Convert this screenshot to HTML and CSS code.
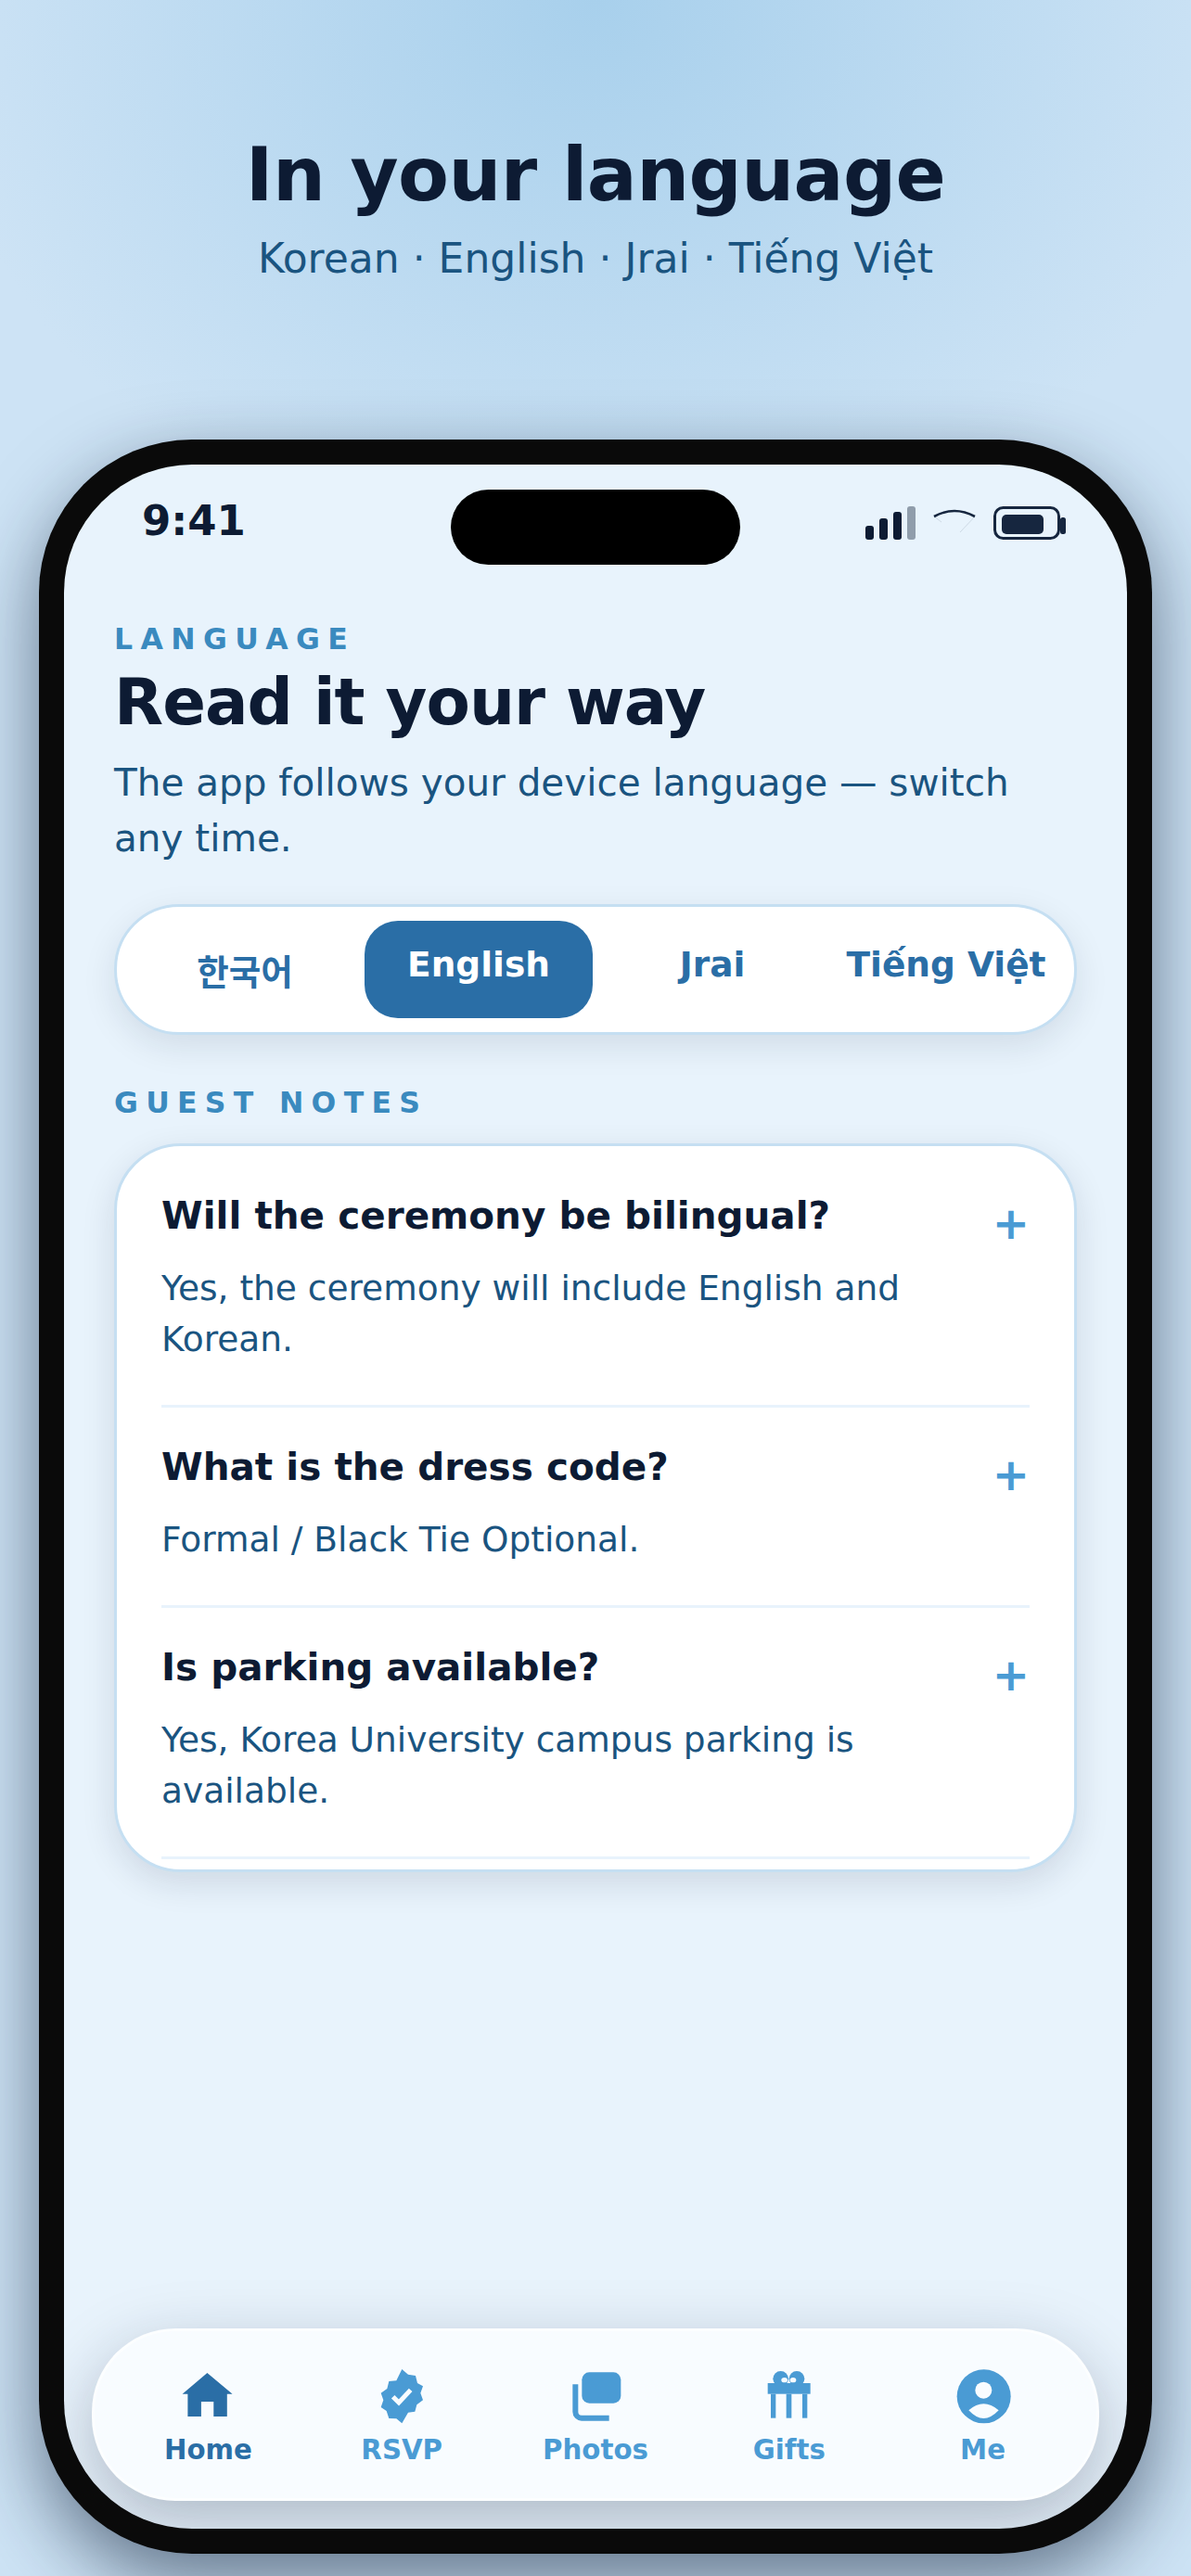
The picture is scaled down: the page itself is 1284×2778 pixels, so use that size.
FILE: index.html
```html
<!DOCTYPE html>
<html lang="en">
<head>
<meta charset="utf-8">
<title>In your language</title>
<link rel="stylesheet" href="styles.css">
</head>
<body>
<header class="hero">
  <h1 class="hero-title">In your language</h1>
  <p class="hero-sub">Korean · English · Jrai · Tiếng Việt</p>
</header>
<div class="phone">
  <div class="screen">
    <div class="status">
      <span class="time">9:41</span>
      <div class="island"></div>
      <div class="status-icons">
        <svg width="54" height="36" viewBox="0 0 54 36"><rect x="0" y="21" width="9" height="15" rx="3" fill="#0d1b33"/><rect x="15" y="13" width="9" height="23" rx="3" fill="#0d1b33"/><rect x="30" y="6" width="9" height="30" rx="3" fill="#0d1b33"/><rect x="45" y="0" width="9" height="36" rx="3" fill="#0d1b33" opacity=".4"/></svg>
        <svg width="48" height="30" viewBox="0 0 48 30"><path d="M2 11 Q24 -1 46 11" fill="none" stroke="#16263f" stroke-width="2.6"/><path d="M2 11 L10 17 M46 11 L30 28" fill="none" stroke="#16263f" stroke-width=".5" opacity=".25"/></svg>
        <svg width="78" height="36" viewBox="0 0 78 36"><rect x="1.5" y="1.5" width="69" height="33" rx="9" fill="none" stroke="#16263f" stroke-width="3"/><rect x="9" y="9" width="45" height="21" rx="5" fill="#16263f"/><rect x="72" y="12" width="6" height="18" rx="2.5" fill="#16263f"/></svg>
      </div>
    </div>
    <main class="content">
      <div class="eyebrow">LANGUAGE</div>
      <h2 class="title">Read it your way</h2>
      <p class="lede">The app follows your device language — switch any time.</p>
      <div class="segment">
        <div class="seg-item">한국어</div>
        <div class="seg-item active">English</div>
        <div class="seg-item">Jrai</div>
        <div class="seg-item">Tiếng Việt</div>
      </div>
      <div class="section-label">GUEST NOTES</div>
      <div class="card">
        <div class="row">
          <div class="q-line"><span class="q">Will the ceremony be bilingual?</span><span class="plus">+</span></div>
          <p class="a">Yes, the ceremony will include English and Korean.</p>
        </div>
        <div class="row">
          <div class="q-line"><span class="q">What is the dress code?</span><span class="plus">+</span></div>
          <p class="a">Formal / Black Tie Optional.</p>
        </div>
        <div class="row">
          <div class="q-line"><span class="q">Is parking available?</span><span class="plus">+</span></div>
          <p class="a">Yes, Korea University campus parking is available.</p>
        </div>
      </div>
    </main>
    <nav class="tabbar">
      <div class="tab on">
        <svg class="ic" viewBox="0 0 90 80"><path d="M44.4 19 L71.6 41.7 H65.8 V66 H51.3 V50 H37.9 V66 H23.4 V41.7 H17.6 Z"/></svg>
        <span>Home</span>
      </div>
      <div class="tab">
        <svg class="ic" viewBox="-6 0 270 240"><polygon points="130,45 150,62 174,66 180,90 198,100 190,122 198,145 178,160 172,182 150,185 130,220 112,205 88,204 80,180 62,168 70,145 62,122 82,108 88,84 112,82"/><path d="M101 134 L120 153 L158 112" fill="none" stroke="#f8fcff" stroke-width="15"/></svg>
        <span>RSVP</span>
      </div>
      <div class="tab">
        <svg class="ic" viewBox="-9 0 270 240"><rect x="82" y="55" width="126" height="100" rx="24"/><path d="M61 94 V183 a20 20 0 0 0 20 20 H170" fill="none" stroke="currentColor" stroke-width="18"/></svg>
        <span>Photos</span>
      </div>
      <div class="tab">
        <svg class="ic" viewBox="3 0 270 240"><circle cx="110" cy="76" r="25"/><circle cx="162" cy="76" r="25"/><rect x="68" y="90" width="138" height="35"/><rect x="78" y="125" width="16" height="78"/><rect x="128" y="125" width="17" height="78"/><rect x="180" y="125" width="16" height="78"/><ellipse cx="122" cy="80" rx="10" ry="8" fill="#f8fcff"/><ellipse cx="150" cy="80" rx="10" ry="8" fill="#f8fcff"/></svg>
        <span>Gifts</span>
      </div>
      <div class="tab">
        <svg class="ic" viewBox="0 0 270 240"><circle cx="137" cy="133" r="87"/><circle cx="136" cy="113" r="27" fill="#f8fcff"/><path d="M88 178 Q136 136 185 178 Q136 230 88 178 Z" fill="#f8fcff"/></svg>
        <span>Me</span>
      </div>
    </nav>
  </div>
</div>
</body>
</html>
```

FILE: styles.css
```css
* { box-sizing: border-box; }
html, body { margin: 0; height: 100%; }
body {
  width: 1284px; height: 2778px; overflow: hidden;
  font-family: "DejaVu Sans", "Noto Sans CJK KR", sans-serif;
  background: radial-gradient(ellipse 720px 620px at 50% 0, #a8d0ec 0%, #cde3f5 100%);
  background-color: #cde3f5;
  display: flex; flex-direction: column; align-items: center;
}
.hero { padding-top: 138px; height: 474px; text-align: center; }
.hero-title { margin: 0; font-size: 80px; letter-spacing: -.6px; font-weight: 700; line-height: 102px; color: #0d1b33; }
.hero-sub { margin: 12px 0 0; font-size: 44px; line-height: 54px; color: #1a5480; }
.phone {
  width: 1200px; height: 2280px; flex: none;
  background: #0a0a0a; border-radius: 165px; padding: 27px;
  box-shadow: 0 30px 80px rgba(13,27,51,.55);
}
.screen {
  height: 100%; border-radius: 138px; background: #e8f3fc;
  display: flex; flex-direction: column; overflow: hidden; position: relative;
}
.status { height: 132px; flex: none; position: relative; display: flex; justify-content: space-between; padding: 0 66px 0 84px; }
.time { font-size: 45px; font-weight: 700; color: #0d1b33; line-height: 52px; margin-top: 35px; }
.island { position: absolute; left: 417px; top: 27px; width: 312px; height: 81px; border-radius: 42px; background: #000; }
.status-icons { display: flex; align-items: flex-start; gap: 18px; padding-top: 45px; }
.content { padding: 0 54px; flex: 1; }
.eyebrow { font-size: 31.5px; font-weight: 700; letter-spacing: 8.4px; color: #3a8abf; line-height: 40px; margin-top: 36px; }
.title { margin: 6px 0 0; font-size: 69px; letter-spacing: -1px; font-weight: 700; line-height: 84px; color: #0d1b33; }
.lede { margin: 15px 0 0; font-size: 40.5px; line-height: 60px; color: #1a5480; }
.segment {
  margin-top: 41px; border: 3px solid #c5dff2; border-radius: 70px; background: #fff;
  padding: 15px; display: flex; gap: 6px; height: 141px;
  box-shadow: 0 12px 36px rgba(13,27,51,.1);
}
.seg-item { flex: 1; text-align: center; font-size: 37.5px; font-weight: 700; color: #2a6ea6; padding-top: 25px; border-radius: 36px; }
.seg-item.active { background: #2a6ea6; color: #fff; }
.section-label { margin-top: 53px; font-size: 31.5px; font-weight: 700; letter-spacing: 8.3px; color: #3a8abf; line-height: 40px; }
.card {
  margin-top: 24px; border: 3px solid #c5dff2; border-radius: 72px; background: #fff;
  padding: 11px 48px; box-shadow: 0 12px 36px rgba(13,27,51,.12);
}
.row { border-bottom: 3px solid #e8f3fc; padding: 37px 0 43px; }
.q-line { display: flex; justify-content: space-between; align-items: flex-start; height: 57px; }
.q { font-size: 40.5px; font-weight: 700; color: #0d1b33; line-height: 54px; }
.plus { font-size: 48px; font-weight: 700; line-height: 54px; padding-top: 8px; color: #4a9bd4; }
.a { margin: 21px 0 0; font-size: 37.5px; line-height: 55px; color: #1a5480; }
.tabbar {
  position: absolute; left: 30px; right: 30px; bottom: 30px; height: 186px;
  border-radius: 90px; background: #f8fcff; border: 3px solid rgba(255,255,255,.6);
  display: flex; align-items: flex-start; padding: 26px 18px 0;
  box-shadow: 0 24px 72px rgba(13,27,51,.27);
}
.tab { flex: 1; display: flex; flex-direction: column; align-items: center; font-size: 29.25px; line-height: 36px; font-weight: 700; color: #4a9bd4; }
.tab span { margin-top: 4px; }
.tab.on { color: #2a6ea6; }
.ic { width: 90px; height: 80px; fill: currentColor; }
```
